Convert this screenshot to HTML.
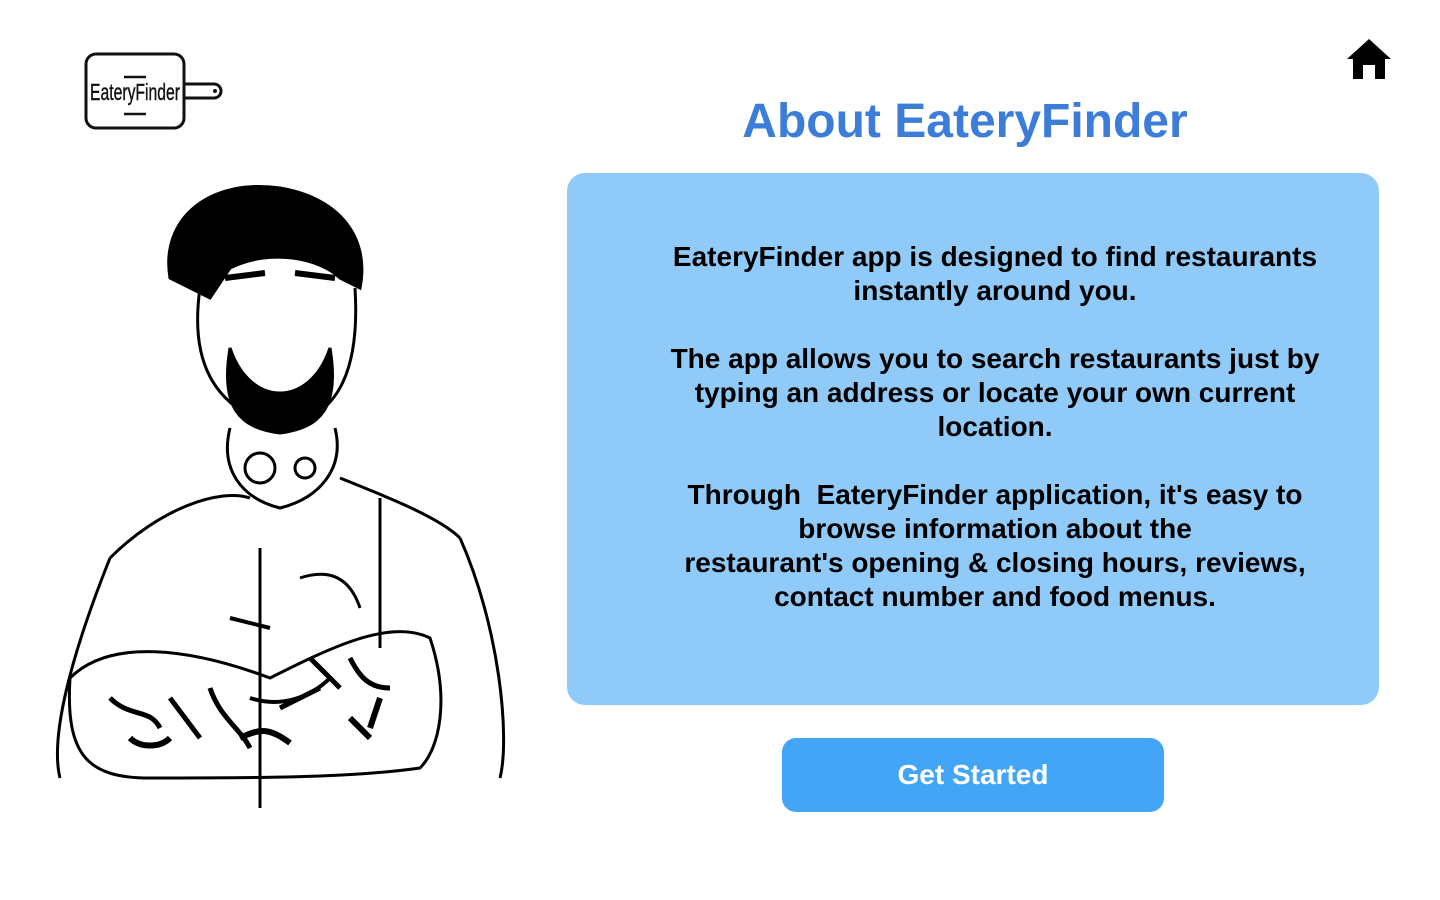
<!DOCTYPE html>
<html><head><meta charset="utf-8"><style>
body{margin:0;width:1440px;height:900px;background:#fff;font-family:"Liberation Sans",Arial,sans-serif;position:relative;overflow:hidden}
h1{position:absolute;left:0;width:1930px;text-align:center;top:94px;margin:0;font-size:48px;font-weight:bold;color:#3b7dd8}
.box{position:absolute;left:567px;top:173px;width:812px;height:532px;background:#90caf9;border-radius:18px}
.box p{position:absolute;left:80px;width:696px;margin:0;text-align:center;font-size:28px;font-weight:bold;line-height:34px;color:#000}
.btn{position:absolute;left:782px;top:738px;width:382px;height:74px;background:#42a5f5;border-radius:14px;color:#fff;font-size:28px;font-weight:bold;text-align:center;line-height:74px}
</style></head><body>
<svg style="position:absolute;left:80px;top:50px" width="150" height="85" viewBox="0 0 150 85">
<rect x="6" y="4" width="98" height="74" rx="10" fill="none" stroke="#111" stroke-width="3"/>
<path d="M104 34 H134 a7 7 0 0 1 0 14 H104" fill="none" stroke="#111" stroke-width="3"/>
<circle cx="135" cy="41" r="2" fill="#111"/>
<path d="M44 27 h22 M44 64 h22" stroke="#111" stroke-width="2.5"/>
<text x="10" y="50" font-family="Liberation Sans Narrow,Liberation Sans,sans-serif" font-size="23" fill="#111" stroke="#111" stroke-width="0.4" textLength="90" lengthAdjust="spacingAndGlyphs">EateryFinder</text>
</svg>
<svg style="position:absolute;left:1346px;top:38px" width="46" height="42" viewBox="0 0 46 42">
<path d="M23 1 L45 21 H39 V41 H29 V27 H17 V41 H7 V21 H1 Z" fill="#000"/>
</svg>
<svg style="position:absolute;left:50px;top:178px" width="460" height="640" viewBox="0 0 460 640" fill="none" stroke="#000" stroke-width="3">
<path d="M120 100 C110 40 160 0 230 10 C290 20 320 60 310 110 L290 100 C270 80 220 70 180 90 L160 120 Z" fill="#000"/>
<path d="M150 110 C140 180 160 230 230 250 C290 240 310 190 305 110"/>
<path d="M180 170 C170 230 190 250 230 255 C270 250 290 230 280 170 C270 200 250 215 230 215 C210 215 190 200 180 170Z" fill="#000"/>
<path d="M175 100 l40 -5 M245 95 l40 5" stroke-width="6"/>
<path d="M180 250 C170 290 190 320 230 330 C270 320 295 290 285 250" />
<circle cx="210" cy="290" r="15"/><circle cx="255" cy="290" r="10"/>
<path d="M60 380 C110 330 170 310 200 320 M290 300 C340 320 390 340 410 360"/>
<path d="M60 380 C20 480 0 560 10 600 M410 360 C450 450 460 560 450 600"/>
<path d="M20 500 C60 460 140 470 220 500 C280 470 340 440 380 460 C400 520 390 570 370 590 C300 600 200 600 100 600 C40 600 15 580 20 500Z"/>
<path d="M60 520 c20 20 40 10 50 30 M120 520 l30 40 M160 510 c10 30 30 40 40 60 M260 480 l30 30 M300 480 c10 20 20 30 40 30 M230 530 l40 -20" stroke-width="5"/>
<path d="M80 560 c10 10 30 10 40 0 M190 560 c20 -10 30 -10 50 5 M300 540 l20 20 M330 520 l-10 30" stroke-width="6"/>
<path d="M210 370 V630 M330 320 V470 M250 400 c30 -10 50 0 60 30"/>
<path d="M180 440 l40 10 M200 520 c30 10 60 0 80 -20" stroke-width="4"/>
</svg>
<h1>About EateryFinder</h1>
<div class="box">
<p style="top:67px">EateryFinder app is designed to find restaurants instantly around you.</p>
<p style="top:169px">The app allows you to search restaurants just by typing an address or locate your own current location.</p>
<p style="top:305px">Through&nbsp; EateryFinder application, it's easy to browse information about the<br>restaurant's opening &amp; closing hours, reviews, contact number and food menus.</p>
</div>
<div class="btn">Get Started</div>
</body></html>
